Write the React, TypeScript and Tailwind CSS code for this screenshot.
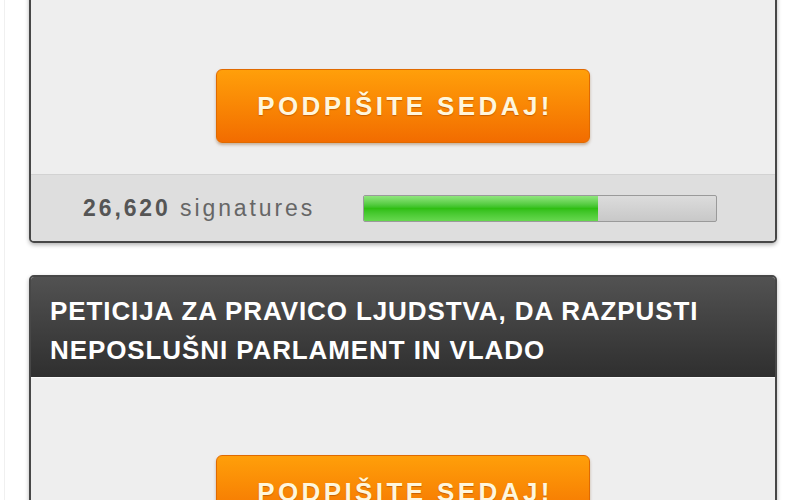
import { Fragment } from "react";

const font = { fontFamily: '"Liberation Sans", Arial, sans-serif' };

function SignButton() {
  return (
    <button
      type="button"
      className="w-[374px] h-[74px] rounded-[6px] border border-[#e06a00] bg-gradient-to-b from-[#ff9f0a] to-[#f26c00] shadow-[0_2px_3px_rgba(120,60,0,0.35)] text-[26px] font-bold tracking-[3.4px] pl-[4px] text-[#fff6dc] [text-shadow:0_1px_1px_rgba(150,60,0,0.5)]"
    >
      PODPIŠITE SEDAJ!
    </button>
  );
}

function ProgressBar({ percent }: { percent: number }) {
  return (
    <div className="w-[354px] h-[27px] rounded-[2px] border border-[#9a9a9a] bg-gradient-to-b from-[#dcdcdc] to-[#c8c8c8] overflow-hidden flex">
      <div
        className="h-full bg-gradient-to-b from-[#8fe67c] via-[#2fbf12] to-[#66d84e]"
        style={{ width: `${percent}%` }}
      />
    </div>
  );
}

function PetitionCard({
  title,
  signatures,
  percent,
  first,
}: {
  title?: string[];
  signatures?: string;
  percent?: number;
  first?: boolean;
}) {
  return (
    <div
      className={
        "shrink-0 w-[748px] border-2 border-[#474747] rounded-[5px] overflow-hidden shadow-[0_2px_4px_rgba(0,0,0,0.3)] bg-[#eeeeee] " +
        (first ? "-mt-[10px] rounded-t-none" : "")
      }
    >
      {title && (
        <div className="h-[101px] bg-gradient-to-b from-[#525252] to-[#2f2f2f] pl-[19px] pt-[15px] border-b border-[#fafafa]">
          {title.map((line) => (
            <Fragment key={line}>
              <div className="text-white font-bold text-[26px] leading-[39px] tracking-[0.9px] whitespace-nowrap">
                {line}
              </div>
            </Fragment>
          ))}
        </div>
      )}
      <div className="flex justify-center pt-[77px] pb-[31px]">
        <SignButton />
      </div>
      {signatures && (
        <div className="h-[67px] bg-[#dedede] border-t border-[#d2d2d2] flex items-center">
          <div className="w-[332px] pl-[52px] text-[23px] tracking-[2.9px] text-[#666] whitespace-nowrap">
            <span className="font-bold text-[#555]">{signatures}</span> signatures
          </div>
          <ProgressBar percent={percent ?? 0} />
        </div>
      )}
    </div>
  );
}

export default function App() {
  return (
    <div className="h-[500px] overflow-hidden bg-white" style={font}>
      <div className="ml-[4px] h-full border-l border-[#f0f0f0] pl-[24px] flex flex-col gap-[32px]">
        <PetitionCard first signatures="26,620" percent={66.5} />
        <PetitionCard
          title={[
            "PETICIJA ZA PRAVICO LJUDSTVA, DA RAZPUSTI",
            "NEPOSLUŠNI PARLAMENT IN VLADO",
          ]}
        />
      </div>
    </div>
  );
}
